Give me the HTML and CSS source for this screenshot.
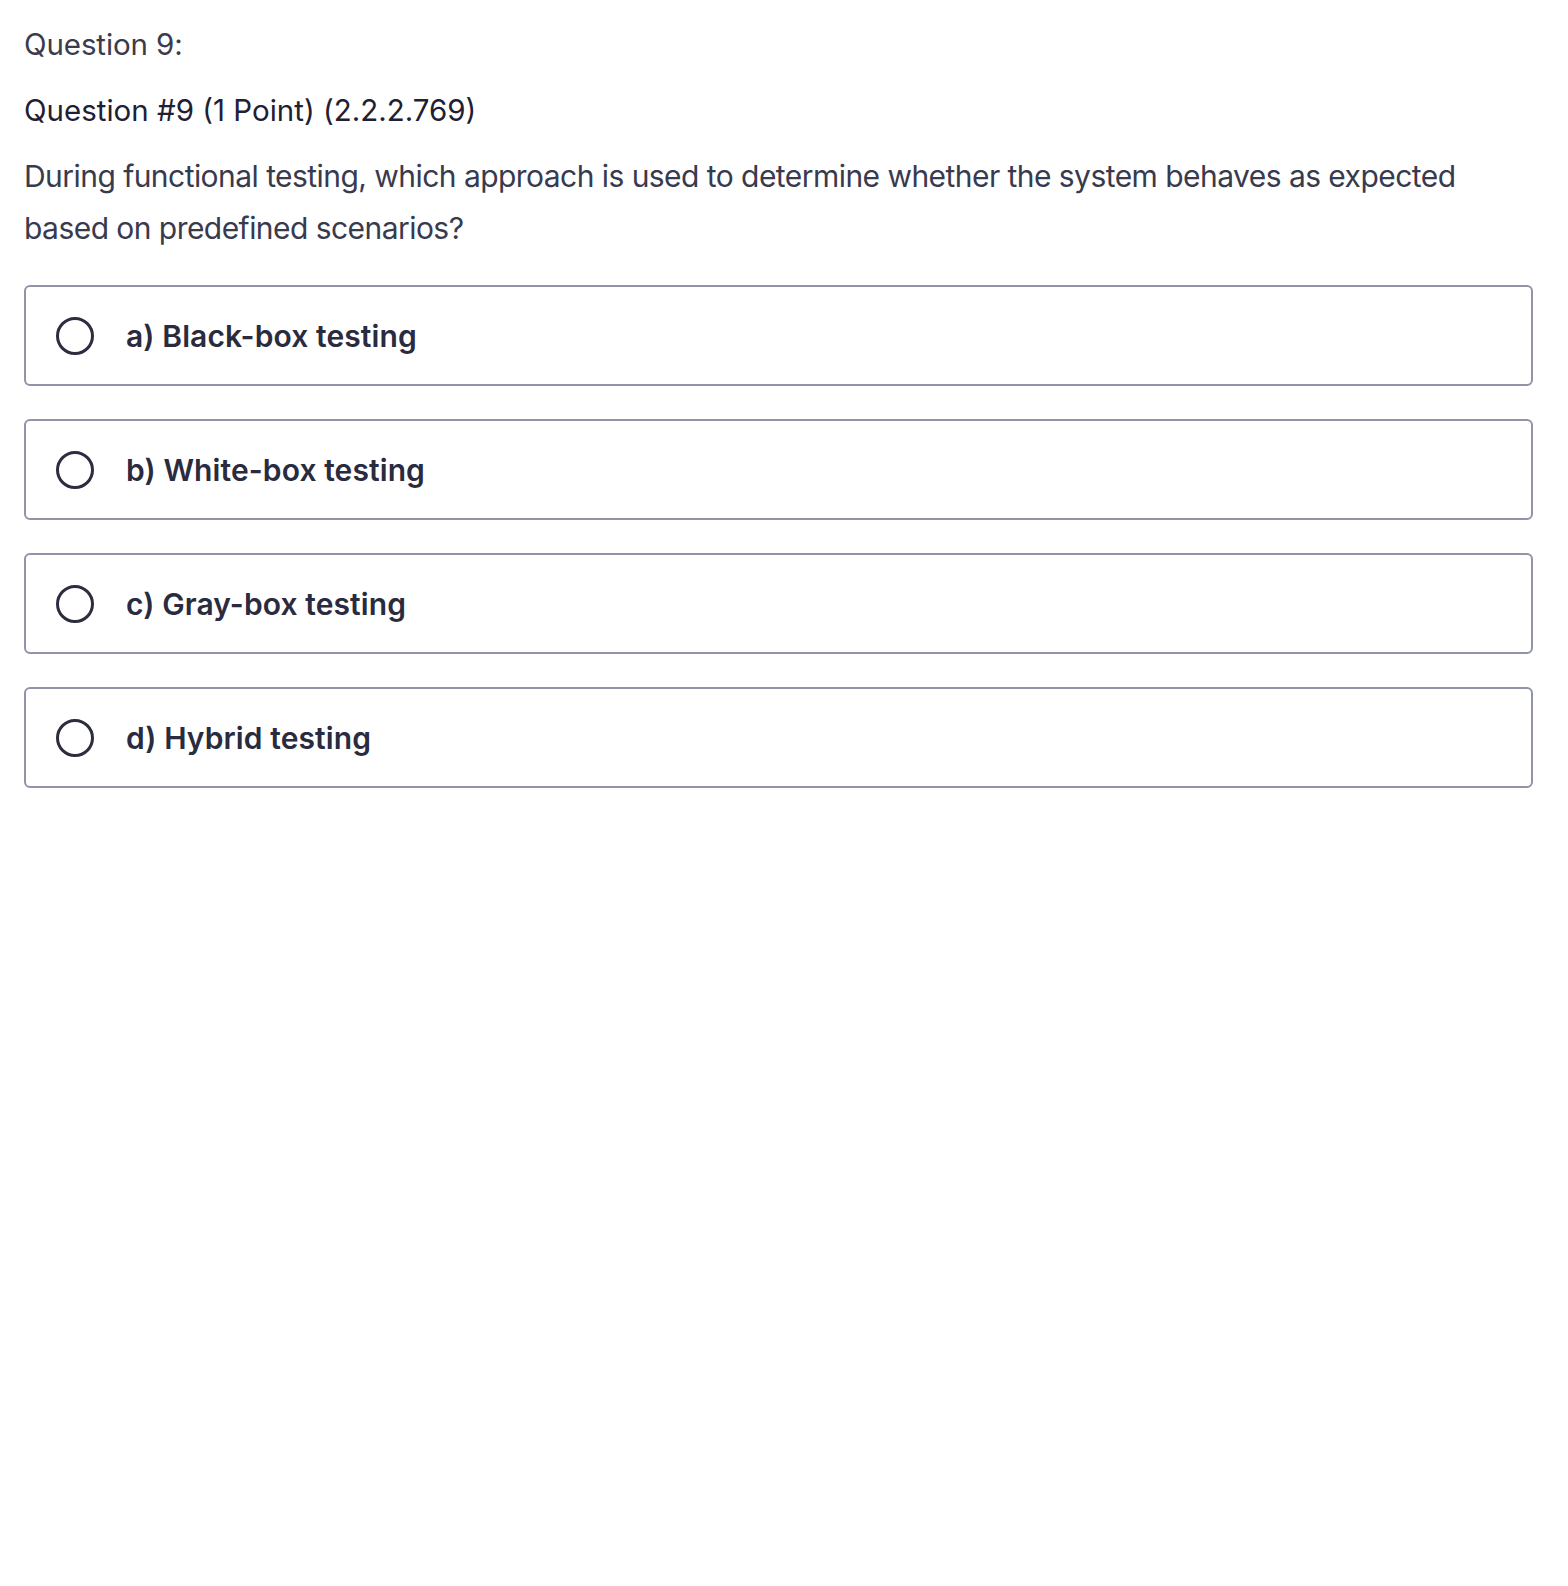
FILE: index.html
```html
<!DOCTYPE html>
<html>
<head>
<meta charset="utf-8">
<link rel="stylesheet" href="styles.css">
</head>
<body>
<div class="page">
  <div class="qnum">Question 9:</div>
  <div class="qtitle">Question #9 (1 Point) (2.2.2.769)</div>
  <p class="qtext">During functional testing, which approach is used to determine whether the system behaves as expected based on predefined scenarios?</p>
  <div class="options">
    <label class="option"><span class="radio"></span><span class="label">a) Black-box testing</span></label>
    <label class="option"><span class="radio"></span><span class="label">b) White-box testing</span></label>
    <label class="option"><span class="radio"></span><span class="label">c) Gray-box testing</span></label>
    <label class="option"><span class="radio"></span><span class="label">d) Hybrid testing</span></label>
  </div>
</div>
</body>
</html>
```
FILE: styles.css
```css
html, body {
  margin: 0;
  padding: 0;
  background: #ffffff;
}
body {
  font-family: Inter, "Noto Sans", "Liberation Sans", sans-serif;
  color: #2c2d3f;
}
.page {
  width: 1509px;
  padding: 24px 0 0 24px;
}
.qnum {
  font-size: 29.5px;
  line-height: 40px;
  color: #3a3b4c;
  letter-spacing: -0.1px;
}
.qtitle {
  margin-top: 26px;
  font-size: 29.5px;
  line-height: 40px;
  color: #1f2033;
  letter-spacing: 0;
}
.qtext {
  margin: 20px 0 0 0;
  font-size: 30px;
  line-height: 52px;
  color: #383a4e;
  letter-spacing: -0.55px;
}
.options {
  margin-top: 31px;
  display: flex;
  flex-direction: column;
  gap: 33px;
}
.option {
  display: flex;
  align-items: center;
  height: 97px;
  border: 2px solid #9193a8;
  border-radius: 6px;
  padding-left: 30px;
  gap: 32px;
}
.radio {
  width: 32px;
  height: 32px;
  border: 3.5px solid #2c2d3f;
  border-radius: 50%;
  flex: none;
}
.label {
  font-size: 30px;
  font-weight: 600;
  color: #2a2b3e;
  letter-spacing: 0.1px;
}
```
